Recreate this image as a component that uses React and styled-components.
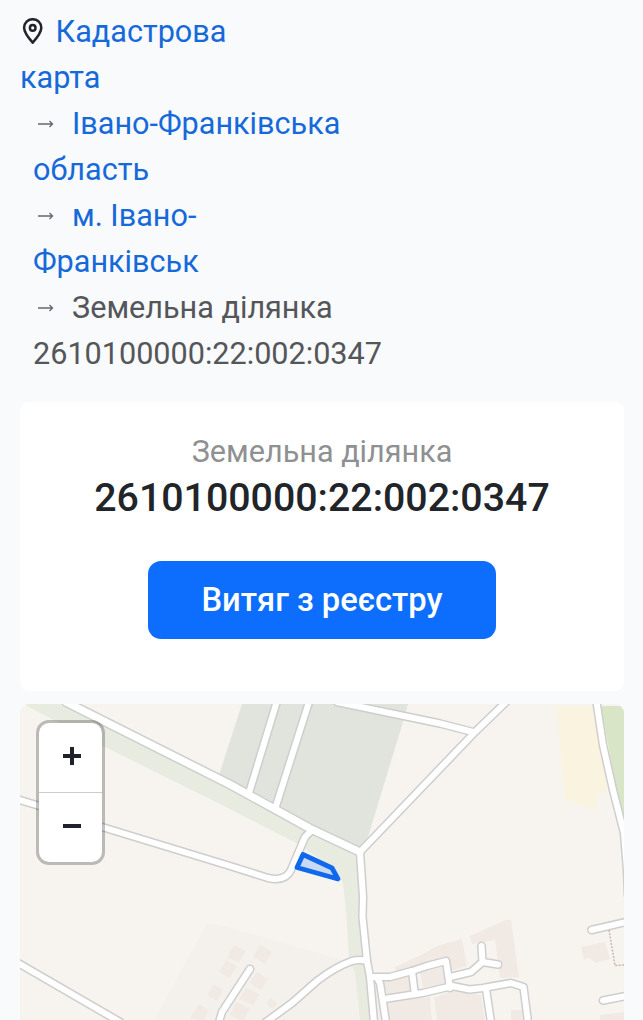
import styled, { createGlobalStyle } from 'styled-components';

const GlobalStyle = createGlobalStyle`
  * {
    box-sizing: border-box;
  }
  body {
    margin: 0;
    background-color: #f8fafc;
    color: #212529;
    font-family: Roboto, 'Liberation Sans', sans-serif;
    font-size: 30.6px;
    line-height: 46px;
  }
`;

const Page = styled.div`
  height: 1020px;
  padding: 9px 19px 0 20px;
  overflow: hidden;
`;

const Breadcrumb = styled.ol`
  list-style: none;
  margin: 0 0 25px;
  padding: 0;
`;
const Crumb = styled.li`
  color: #555659;
  white-space: nowrap;
  padding-left: ${(props) => (props.$first ? '0' : '13px')};
`;
const Link = styled.a`
  color: #1569d9;
  text-decoration: none;
`;
const PinIcon = styled.svg`
  width: 26px;
  height: 26px;
  margin-right: 9.5px;
  vertical-align: -2px;
`;
const ArrowIcon = styled.svg`
  width: 18px;
  height: 12px;
  margin: 0 17px 0 4px;
  vertical-align: 4px;
`;

const Card = styled.section`
  height: 289px;
  margin-bottom: 13px;
  padding-top: 27px;
  border-radius: 9px;
  background-color: #fff;
  text-align: center;
`;
const Label = styled.div`
  color: #8f9092;
`;
const Number = styled.h1`
  margin: 0 0 39.5px;
  font-size: 39.3px;
  font-weight: 500;
  line-height: 46px;
`;
const Button = styled.button`
  width: 348px;
  height: 78px;
  border: 0;
  border-radius: 13px;
  background-color: #0d6efd;
  color: #fff;
  font-family: inherit;
  font-size: 32.7px;
  font-weight: 500;
`;

const Map = styled.section`
  position: relative;
  height: 316px;
  border-radius: 9px 9px 0 0;
  overflow: hidden;
  background-color: #f7f4ef;
`;
const MapDrawing = styled.svg`
  display: block;
  width: 604px;
  height: 316px;
`;
const Zoom = styled.div`
  position: absolute;
  top: 16px;
  left: 16px;
  width: 69px;
  border: 3px solid rgba(0, 0, 0, 0.24);
  border-radius: 13px;
  background-color: #fff;
  background-clip: padding-box;
`;
const ZoomButton = styled.button`
  display: flex;
  align-items: center;
  justify-content: center;
  width: 100%;
  height: 69px;
  padding: 0 0 4px 3px;
  border: 0;
  background: none;
  & + & {
    height: 70px;
    border-top: 1px solid #ccc;
  }
`;

const Arrow = () => (
  <ArrowIcon viewBox="0 0 18 12" fill="none" stroke="#66676a" strokeWidth="1.3">
    <path d="M1 6h14.5M12.5 3l3 3-3 3" />
  </ArrowIcon>
);

const roads = [
  'M20 800L38 805.5L102 827L230 866L268 878Q285 882 291 870L305 837L312 830',
  'M276.7 702L249 793',
  'M309 702L276 806',
  'M337 702L440 723.5L473 732',
  'M506 702L475 732L360 852',
  'M18 963L120 1022',
  'M360 852L363 897L362.5 917L367 961L370 977L374 1022',
  'M367 961Q360 959 352 961Q335 967 317 981L292 1003L266 1022',
  'M370 977H390L412 971L427 966L446 961L450 988',
  'M412 971L414.5 991',
  'M384 999L423 993L452 986L469.5 989.5L483 988L511 983L523.5 987L528 1022',
  'M486 989L491 1022',
  'M450 977L471 972L482.5 962L481.5 946',
  'M482.5 962L498 964.5',
  'M377 978L380 983L386 1022',
  'M250 969L222 1012L219 1022',
  'M596.5 702L603 745L613 790L624 833L627 870L628 895',
  'M591.5 930L626 922',
  'M603 1000.5L626 996',
];

const mainRoad = 'M66 702L230 784.5L310 828.5L360 852';

const buildings = [
  'M234 945l12 6-7 12-12-6z',
  'M260 945l12 7-7 12-12-7z',
  'M226 960l11 6-7 12-11-6z',
  'M257 972l11 7-7 11-12-7z',
  'M214 984l9 6-6 11-10-6z',
  'M246 988l14 6-7 11-14-6z',
  'M270 998l7 5-4 6-7-5z',
  'M236 1002l14 7-7 12-13-6z',
  'M199 1004l10 6-6 12-13-4z',
  'M395 967l28-13 14-8 25-7 5 27-17 5-6-11-48 12z',
  'M470 936l36-16h5l8 57-19 1-5-38-23 4z',
  'M384 982l24-7 3 15-24 4z',
  'M420 973l22-6 3 16-22 5z',
  'M388 1003l42-6 2 23h-43z',
  'M434 998l17-7 30 4 4 25h-48z',
  'M511 1010h13v12h-13z',
  'M581 947l24-5 5 17-15 4-5-5-6 1z',
  'M600 1015l24-3v10h-24z',
];

const MapTile = () => (
  <MapDrawing viewBox="20 704 604 316" fill="none">
    {/* areas */}
    <path fill="#f4f1ed" d="M207 923L228 927L340 959L375 980L385 1022H153z" />
    <path
      fill="#e8ebdf"
      d="M23 704H70L310 829L362 852L363 960L372 1020H360L355 973L349 960L346 910L343 883L333 868L298 844L220 804L103 746z"
    />
    <path fill="#e0e4dd" d="M242 704H408L403 722L364 850L218 778z" />
    <path fill="#faf3df" d="M556.5 706H595L607 793L597 793V811L565 799z" />
    <path fill="#d8e6c7" d="M601 706H624V833z" />
    {buildings.map((d) => (
      <path key={d} d={d} fill="#f1e9e3" />
    ))}
    {/* roads: casing first, then the surface */}
    <g stroke="#cecece" strokeLinecap="round" strokeLinejoin="round">
      {roads.map((d) => (
        <path key={d} d={d} strokeWidth="9" />
      ))}
      <path d={mainRoad} strokeWidth="10.2" />
    </g>
    <g stroke="#fff" strokeLinecap="round" strokeLinejoin="round">
      {roads.map((d) => (
        <path key={d} d={d} strokeWidth="6" />
      ))}
      <path d={mainRoad} strokeWidth="7.2" />
    </g>
    <path d="M609 930L615 965.5L624 965" stroke="#c9b1a3" strokeWidth="1.4" strokeDasharray="2 1.3" />
    {/* parcel */}
    <path
      d="M303 854.5L332 868L338 879L297 867.5z"
      fill="#0d6efd"
      fillOpacity="0.2"
      stroke="#1068ec"
      strokeWidth="4.8"
      strokeLinejoin="round"
    />
  </MapDrawing>
);

const App = () => {
  return (
    <Page>
      <GlobalStyle />
      <Breadcrumb>
        <Crumb $first>
          <PinIcon viewBox="0 0 26 26" fill="none" stroke="#212529" strokeWidth="2.5">
            <path d="M12.7 24.6C9 20.5 4.1 14.6 4.1 9.8a8.6 8.6 0 0 1 17.2 0c0 4.8-4.9 10.7-8.6 14.8z" />
            <circle cx="12.7" cy="9.9" r="2.8" />
          </PinIcon>
          <Link>
            Кадастрова
            <br />
            карта
          </Link>
        </Crumb>
        <Crumb>
          <Arrow />
          <Link>
            Івано-Франківська
            <br />
            область
          </Link>
        </Crumb>
        <Crumb>
          <Arrow />
          <Link>
            м. Івано-
            <br />
            Франківськ
          </Link>
        </Crumb>
        <Crumb>
          <Arrow />
          Земельна ділянка
          <br />
          2610100000:22:002:0347
        </Crumb>
      </Breadcrumb>

      <Card>
        <Label>Земельна ділянка</Label>
        <Number>2610100000:22:002:0347</Number>
        <Button>Витяг з реєстру</Button>
      </Card>

      <Map>
        <MapTile />
        <Zoom>
          <ZoomButton aria-label="+">
            <svg width="18" height="18" stroke="#20222b" strokeWidth="4">
              <path d="M0 9h18M9 0v18" />
            </svg>
          </ZoomButton>
          <ZoomButton aria-label="−">
            <svg width="18" height="18" stroke="#20222b" strokeWidth="4">
              <path d="M0 9h18" />
            </svg>
          </ZoomButton>
        </Zoom>
      </Map>
    </Page>
  );
};

export default App;
